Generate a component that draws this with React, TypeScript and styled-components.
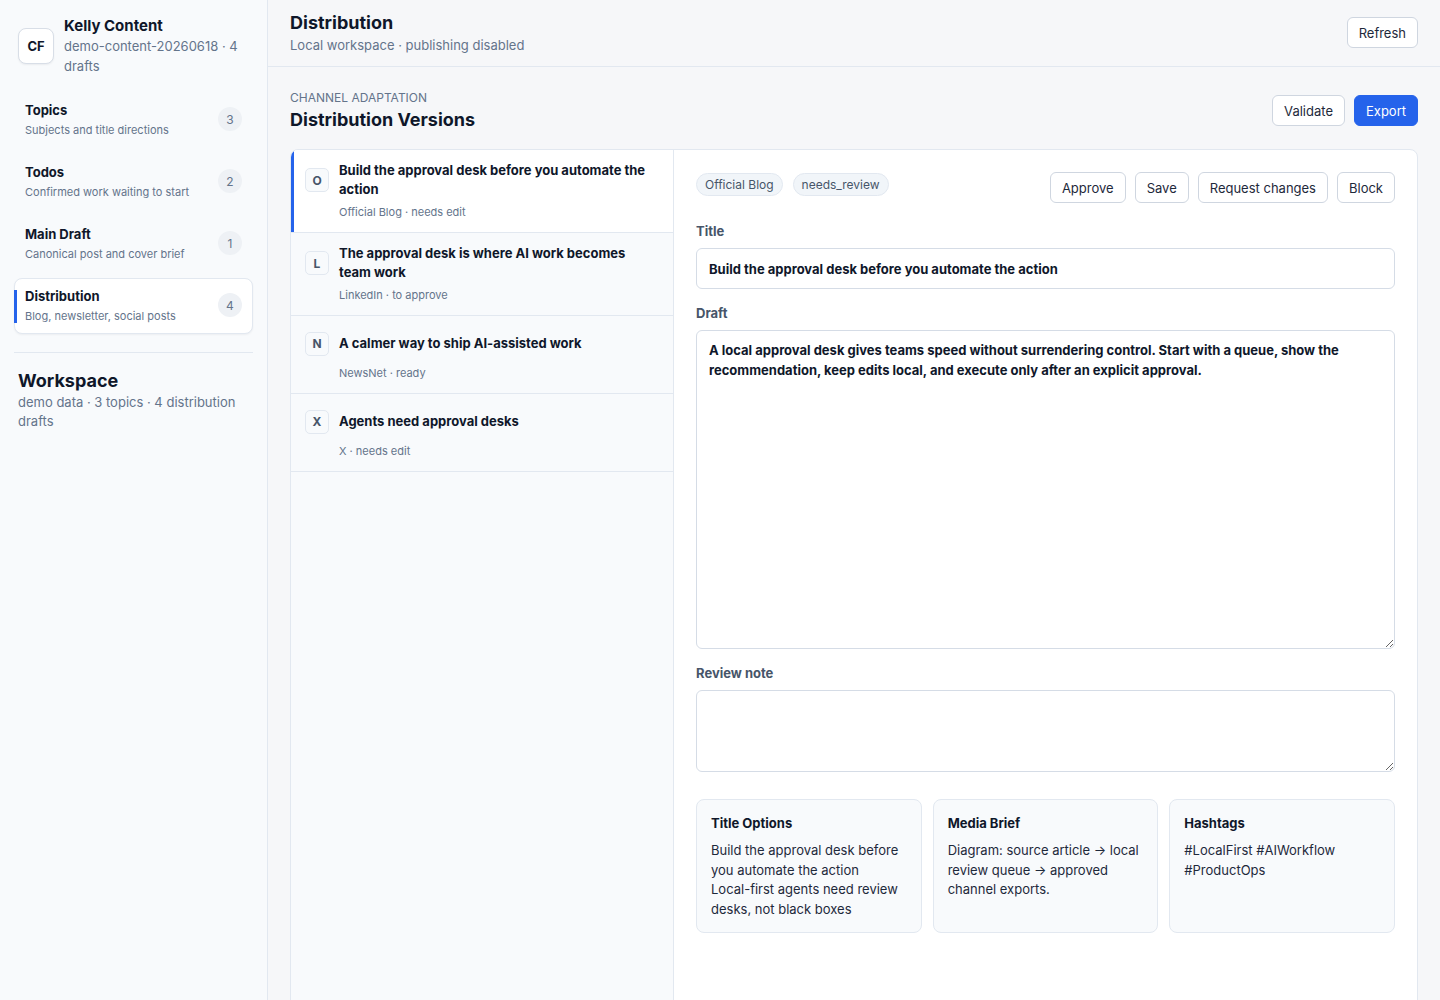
import styled, { createGlobalStyle } from "styled-components";

const GlobalStyle = createGlobalStyle`
  * { box-sizing: border-box; }
  html, body {
    margin: 0;
    padding: 0;
    height: 100%;
    overflow: hidden;
  }
  body {
    font-family: Inter, "Liberation Sans", sans-serif;
    color: #0f172a;
    background: #f6f7f9;
  }
`;

type NavEntry = { title: string; sub: string; count: number; active?: boolean };

const navItems: NavEntry[] = [
  { title: "Topics", sub: "Subjects and title directions", count: 3 },
  { title: "Todos", sub: "Confirmed work waiting to start", count: 2 },
  { title: "Main Draft", sub: "Canonical post and cover brief", count: 1 },
  { title: "Distribution", sub: "Blog, newsletter, social posts", count: 4, active: true },
];

type Version = { letter: string; title: string; meta: string; selected?: boolean };

const versions: Version[] = [
  {
    letter: "O",
    title: "Build the approval desk before you automate the action",
    meta: "Official Blog · needs edit",
    selected: true,
  },
  { letter: "L", title: "The approval desk is where AI work becomes team work", meta: "LinkedIn · to approve" },
  { letter: "N", title: "A calmer way to ship AI-assisted work", meta: "NewsNet · ready" },
  { letter: "X", title: "Agents need approval desks", meta: "X · needs edit" },
];

const App: React.FC = () => {
  return (
    <>
      <GlobalStyle />
      <Shell>
        <Sidebar>
          <Brand>
            <Avatar>CF</Avatar>
            <div>
              <BrandName>Kelly Content</BrandName>
              <BrandSub>demo-content-20260618 · 4 drafts</BrandSub>
            </div>
          </Brand>
          <Nav>
            {navItems.map((item) => (
              <NavItem key={item.title} $active={item.active}>
                <div>
                  <NavTitle>{item.title}</NavTitle>
                  <NavSub>{item.sub}</NavSub>
                </div>
                <Count>{item.count}</Count>
              </NavItem>
            ))}
          </Nav>
          <Divider />
          <Workspace>
            <h3>Workspace</h3>
            <p>demo data · 3 topics · 4 distribution drafts</p>
          </Workspace>
        </Sidebar>

        <Main>
          <TopBar>
            <div>
              <PageTitle>Distribution</PageTitle>
              <PageSub>Local workspace · publishing disabled</PageSub>
            </div>
            <Button>Refresh</Button>
          </TopBar>

          <Content>
            <SectionHead>
              <div>
                <Eyebrow>Channel adaptation</Eyebrow>
                <SectionTitle>Distribution Versions</SectionTitle>
              </div>
              <ButtonRow>
                <Button>Validate</Button>
                <Button $primary>Export</Button>
              </ButtonRow>
            </SectionHead>

            <Panel>
              <VersionList>
                {versions.map((v) => (
                  <VersionItem key={v.letter} $selected={v.selected}>
                    <VersionHead>
                      <Letter>{v.letter}</Letter>
                      <VersionTitle>{v.title}</VersionTitle>
                    </VersionHead>
                    <VersionMeta>{v.meta}</VersionMeta>
                  </VersionItem>
                ))}
              </VersionList>

              <Editor>
                <Toolbar>
                  <ChipRow>
                    <Chip>Official Blog</Chip>
                    <Chip>needs_review</Chip>
                  </ChipRow>
                  <ButtonRow>
                    <Button>Approve</Button>
                    <Button>Save</Button>
                    <Button>Request changes</Button>
                    <Button>Block</Button>
                  </ButtonRow>
                </Toolbar>

                <Field>
                  <Label>Title</Label>
                  <TitleInput defaultValue="Build the approval desk before you automate the action" />
                </Field>
                <Field>
                  <Label>Draft</Label>
                  <TextArea
                    $height={319}
                    defaultValue="A local approval desk gives teams speed without surrendering control. Start with a queue, show the recommendation, keep edits local, and execute only after an explicit approval."
                  />
                </Field>
                <Field>
                  <Label>Review note</Label>
                  <TextArea $height={82} defaultValue="" />
                </Field>

                <Cards>
                  <Card>
                    <h4>Title Options</h4>
                    <p>Build the approval desk before you automate the action</p>
                    <p>Local-first agents need review desks, not black boxes</p>
                  </Card>
                  <Card>
                    <h4>Media Brief</h4>
                    <p>Diagram: source article → local review queue → approved channel exports.</p>
                  </Card>
                  <Card>
                    <h4>Hashtags</h4>
                    <p>#LocalFirst #AIWorkflow #ProductOps</p>
                  </Card>
                </Cards>
              </Editor>
            </Panel>
          </Content>
        </Main>
      </Shell>
    </>
  );
};

export default App;

const Shell = styled.div`
  display: grid;
  grid-template-columns: 268px 1fr;
  height: 100vh;
`;

const Sidebar = styled.aside`
  background: #f8fafc;
  border-right: 1px solid #e2e8f0;
  padding: 16px 14px;
`;

const Brand = styled.div`
  display: flex;
  align-items: center;
  gap: 10px;
  padding: 0 4px;
`;

const Avatar = styled.div`
  flex: none;
  width: 36px;
  height: 36px;
  border: 1px solid #d8dee7;
  border-radius: 8px;
  background: #fff;
  display: flex;
  align-items: center;
  justify-content: center;
  font-size: 13px;
  font-weight: 700;
  box-shadow: 0 1px 2px rgba(15, 23, 42, 0.06);
`;

const BrandName = styled.div`
  font-size: 15px;
  font-weight: 700;
  line-height: 20px;
`;

const BrandSub = styled.div`
  font-size: 13px;
  line-height: 20px;
  color: #64748b;
`;

const Nav = styled.nav`
  display: flex;
  flex-direction: column;
  gap: 6px;
  margin-top: 16px;
`;

const NavItem = styled.div<{ $active?: boolean }>`
  position: relative;
  display: flex;
  align-items: center;
  justify-content: space-between;
  min-height: 56px;
  padding: 7px 10px 9px;
  border-radius: 8px;
  border: 1px solid ${(p) => (p.$active ? "#e2e8f0" : "transparent")};
  background: ${(p) => (p.$active ? "#fff" : "transparent")};
  box-shadow: ${(p) => (p.$active ? "0 1px 2px rgba(15, 23, 42, 0.05)" : "none")};

  /* accent bar on the current section */
  &::before {
    content: "";
    display: ${(p) => (p.$active ? "block" : "none")};
    position: absolute;
    left: -1px;
    top: 11px;
    bottom: 10px;
    width: 3px;
    background: #2563eb;
  }
`;

const NavTitle = styled.div`
  font-size: 13px;
  font-weight: 700;
  line-height: 20px;
`;

const NavSub = styled.div`
  font-size: 11px;
  line-height: 16px;
  margin-top: 2px;
  color: #64748b;
`;

const Count = styled.span`
  width: 24px;
  height: 24px;
  border-radius: 50%;
  background: #eef1f5;
  color: #64748b;
  font-size: 12px;
  display: flex;
  align-items: center;
  justify-content: center;
`;

const Divider = styled.hr`
  border: 0;
  border-top: 1px solid #e2e8f0;
  margin: 18px 0 16px;
`;

const Workspace = styled.div`
  padding: 0 4px;

  h3 {
    margin: 0;
    font-size: 18px;
    line-height: 24px;
    font-weight: 700;
  }

  p {
    margin: 0;
    font-size: 13px;
    line-height: 19px;
    color: #64748b;
  }
`;

const Main = styled.main`
  display: flex;
  flex-direction: column;
  min-width: 0;
  background: #f6f7f9;
`;

const TopBar = styled.header`
  height: 67px;
  flex: none;
  display: flex;
  justify-content: space-between;
  align-items: center;
  padding: 0 22px 1px;
  border-bottom: 1px solid #e2e8f0;
`;

const PageTitle = styled.h1`
  margin: 0;
  font-size: 18px;
  line-height: 24px;
  font-weight: 700;
`;

const PageSub = styled.div`
  font-size: 13px;
  line-height: 20px;
  color: #64748b;
`;

const Content = styled.section`
  padding: 22px 22px 0;
  display: flex;
  flex-direction: column;
`;

const SectionHead = styled.div`
  display: flex;
  justify-content: space-between;
  align-items: center;
  margin-bottom: 17px;
`;

const Eyebrow = styled.div`
  font-size: 12px;
  line-height: 16px;
  text-transform: uppercase;
  color: #64748b;
  padding-top: 1px;
`;

const SectionTitle = styled.h2`
  margin: 2px 0 0;
  font-size: 18px;
  line-height: 24px;
  font-weight: 700;
`;

const ButtonRow = styled.div`
  display: flex;
  align-items: center;
  gap: 9px;
`;

const ChipRow = styled.div`
  display: flex;
  gap: 10px;
  padding-top: 1px;
`;

const Button = styled.button<{ $primary?: boolean }>`
  height: 31px;
  padding: 0 11px;
  border-radius: 6px;
  font-family: inherit;
  font-size: 13px;
  cursor: pointer;
  color: ${(p) => (p.$primary ? "#fff" : "#1e293b")};
  background: ${(p) => (p.$primary ? "#2563eb" : "#fff")};
  border: 1px solid ${(p) => (p.$primary ? "#2563eb" : "#cfd6e0")};
`;

const Panel = styled.div`
  display: grid;
  grid-template-columns: 383px 1fr;
  height: 880px;
  background: #fff;
  border: 1px solid #e2e8f0;
  border-radius: 8px;
  overflow: hidden;
`;

const VersionList = styled.div`
  background: #f8fafc;
  border-right: 1px solid #e2e8f0;
`;

const VersionItem = styled.div<{ $selected?: boolean }>`
  padding: 11px 16px 12px 14px;
  border-bottom: 1px solid #e2e8f0;
  background: ${(p) => (p.$selected ? "#fff" : "transparent")};
  box-shadow: ${(p) => (p.$selected ? "inset 3px 0 0 #2563eb" : "none")};
`;

const VersionHead = styled.div`
  display: flex;
  align-items: center;
  gap: 10px;
  min-height: 33px;
`;

const Letter = styled.span`
  flex: none;
  width: 24px;
  height: 24px;
  border-radius: 5px;
  border: 1px solid #e2e8f0;
  background: #f8fafc;
  color: #475569;
  font-size: 12px;
  font-weight: 700;
  display: flex;
  align-items: center;
  justify-content: center;
`;

const VersionTitle = styled.div`
  font-size: 13px;
  line-height: 19px;
  font-weight: 700;
`;

const VersionMeta = styled.div`
  margin-top: 5px;
  padding-left: 34px;
  font-size: 11px;
  line-height: 16px;
  color: #64748b;
`;

const Editor = styled.div`
  padding: 22px 22px;
  display: flex;
  flex-direction: column;
  gap: 15px;
  min-width: 0;
`;

const Toolbar = styled.div`
  display: flex;
  justify-content: space-between;
  align-items: flex-start;
  margin-bottom: 4px;
`;

const Chip = styled.span`
  height: 23px;
  padding: 0 8px;
  display: inline-flex;
  align-items: center;
  border-radius: 999px;
  border: 1px solid #e2e8f0;
  background: #f1f5f9;
  color: #475569;
  font-size: 12px;
`;

const Field = styled.label`
  display: flex;
  flex-direction: column;
  gap: 8px;
`;

const Label = styled.span`
  font-size: 13px;
  line-height: 18px;
  font-weight: 700;
  color: #475569;
`;

const TitleInput = styled.input`
  height: 41px;
  padding: 0 12px;
  border: 1px solid #d5dce6;
  border-radius: 6px;
  font-family: inherit;
  font-size: 13px;
  font-weight: 700;
  color: #0f172a;
  background: #fff;
  outline: none;
`;

const TextArea = styled.textarea<{ $height: number }>`
  height: ${(p) => p.$height}px;
  padding: 9px 12px;
  border: 1px solid #d5dce6;
  border-radius: 6px;
  font-family: inherit;
  font-size: 13px;
  line-height: 20px;
  font-weight: 700;
  color: #0f172a;
  background: #fff;
  resize: vertical;
  outline: none;
`;

const Cards = styled.div`
  display: grid;
  grid-template-columns: repeat(3, 1fr);
  gap: 11px;
  margin-top: 12px;
`;

const Card = styled.div`
  padding: 14px 14px 13px;
  border: 1px solid #e2e8f0;
  border-radius: 8px;
  background: #f8fafc;

  h4 {
    margin: 0 0 9px;
    font-size: 13px;
    line-height: 18px;
    font-weight: 700;
  }

  p {
    margin: 0;
    font-size: 13px;
    line-height: 19.5px;
    color: #1e293b;
  }
`;
